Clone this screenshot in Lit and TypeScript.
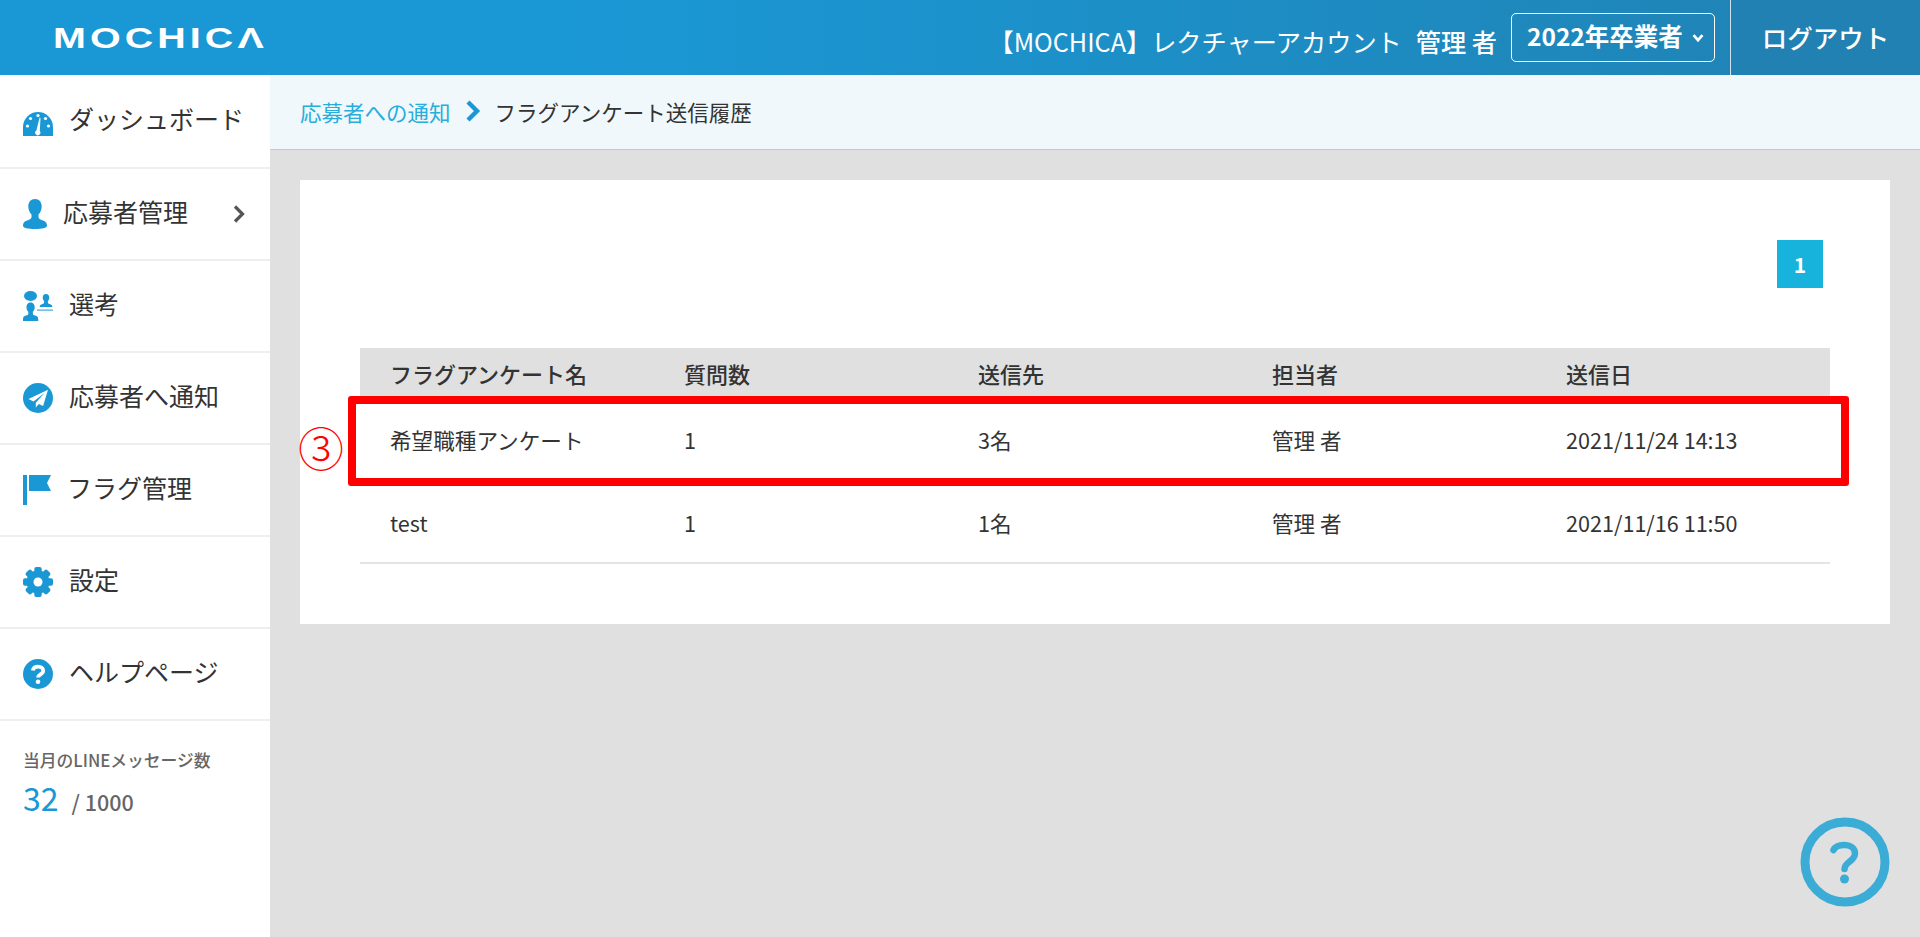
import { LitElement, html, css, svg } from "lit";
import { customElement } from "lit/decorators.js";

const teeth = [0, 45, 90, 135, 180, 225, 270, 315];

const icons: Record<string, unknown> = {
  gauge: svg`<svg class="ic" viewBox="0 0 30 30"><path fill="#1a98d5" d="M0 30V21A15 15 0 0 1 30 21V30Z"/><g fill="#fff"><circle cx="15" cy="9.500" r="1.600"/><circle cx="7.500" cy="12.500" r="1.600"/><circle cx="22.500" cy="12.500" r="1.600"/><circle cx="4.500" cy="20" r="1.600"/><circle cx="25.500" cy="20" r="1.600"/><path d="M16.600 11.500 17.500 12 16.800 25a2.600 2.600 0 1 1-3.400-.6Z"/></g></svg>`,
  person: svg`<svg class="ic" viewBox="0 0 30 30"><path fill="#1a98d5" d="M12 0c4.200 0 6.700 3.200 6.700 7.300 0 3.300-1.400 6.500-3.200 8.300v2.400c0 1.500 1.200 2.200 3.200 3 2.800 1 5.300 2.100 5.300 5.700 0 2.300-5 3.300-12 3.300S0 29 0 26.700c0-3.600 2.500-4.700 5.300-5.700 2-.8 3.200-1.500 3.200-3v-2.400C6.700 13.800 5.300 10.600 5.300 7.300 5.300 3.200 7.800 0 12 0Z"/></svg>`,
  select: svg`<svg class="ic" viewBox="0 0 30 30"><g fill="#1a98d5"><ellipse cx="7.500" cy="5" rx="6.500" ry="5"/><path d="M7.500 11.500c3 0 4.200 2.300 4.200 4.700 0 2-.8 3.600-1.800 4.600v2c0 1 1 1.400 2.200 1.800 1.800.6 3.100 1.200 3.100 3.400v2H0v-2c0-2.200 1.300-2.800 3.100-3.400 1.200-.4 2.200-.8 2.200-1.800v-2c-1-1-1.800-2.600-1.800-4.600 0-2.400 1.200-4.700 4-4.700Z"/><path d="M23 3c2.200 0 3.300 1.500 3.300 3.600 0 1.500-.6 2.800-1.400 3.500v1.400c0 .8.800 1.100 1.700 1.400 1.600.5 2.700 1 2.700 3.100H16.700c0-2.100 1.100-2.600 2.700-3.100.9-.3 1.700-.6 1.700-1.400v-1.400c-.8-.7-1.400-2-1.400-3.500C19.700 4.500 20.800 3 23 3Z"/><rect x="14" y="18.600" width="16" height="1"/></g></svg>`,
  send: svg`<svg class="ic" viewBox="0 0 30 30"><circle cx="15" cy="15" r="15" fill="#1a98d5"/><path fill="#fff" d="M25 6.800 5.500 16l5 2.400L21.500 10l-8.700 9.800v4.700l3-3.500 4.300 2Z"/></svg>`,
  flag: svg`<svg class="ic" viewBox="0 0 30 30"><path fill="#1a98d5" d="M0 0h4v30H0zM6 0h22l-4 8 4 8H6z"/></svg>`,
  gear: svg`<svg class="ic" viewBox="0 0 30 30"><g fill="#1a98d5"><circle cx="15" cy="15" r="11.500"/>${teeth.map(
    (a) => svg`<rect x="11.300" y="0" width="7.400" height="8" rx="2" transform="rotate(${a} 15 15)"/>`
  )}</g><circle cx="15" cy="15" r="4.500" fill="#fff"/></svg>`,
  help: svg`<svg class="ic" viewBox="0 0 30 30"><circle cx="15" cy="15" r="15" fill="#1a98d5"/><path fill="none" stroke="#fff" stroke-width="3.800" d="M9.800 11.500c.5-2.600 2.600-3.900 5.200-3.900 3 0 5.200 1.700 5.200 4.100 0 3.700-5.200 3.600-5.200 6.800"/><circle cx="15" cy="22.700" r="2.300" fill="#fff"/></svg>`,
};

const navItems = [
  { icon: "gauge", label: "ダッシュボード", cls: "" },
  { icon: "person", label: "応募者管理", cls: "narrow", more: true },
  { icon: "select", label: "選考", cls: "" },
  { icon: "send", label: "応募者へ通知", cls: "" },
  { icon: "flag", label: "フラグ管理", cls: "tight" },
  { icon: "gear", label: "設定", cls: "" },
  { icon: "help", label: "ヘルプページ", cls: "" },
];

const rows = [
  ["希望職種アンケート", "1", "3名", "管理 者", "2021/11/24 14:13"],
  ["test", "1", "1名", "管理 者", "2021/11/16 11:50"],
];

@customElement("app-root")
export class AppRoot extends LitElement {
  static styles = css`
    :host {
      display: block;
      width: 100%;
      height: 937px;
      overflow: hidden;
      background: #e0e0e0;
      color: #333;
      font-family: "Noto Sans CJK JP", "Noto Sans", sans-serif;
      position: relative;
    }
    .top {
      height: 75px;
      display: flex;
      align-items: center;
      color: #fff;
      background: linear-gradient(90deg, #1a98d5 0%, #1a98d5 30%, #2082b3 100%);
    }
    .logo {
      margin-left: 53px;
      width: 212px;
      font-family: "Liberation Sans", sans-serif;
      font-weight: 700;
      font-size: 29px;
      line-height: 30px;
      letter-spacing: 3px;
      transform: scaleX(1.36);
      transform-origin: left center;
      white-space: nowrap;
    }
    .who {
      margin-left: auto;
      font-size: 25.200px;
      line-height: 1;
      white-space: nowrap;
      margin-top: 8px;
    }
    .who span {
      margin-left: 14px;
      font-weight: 500;
    }
    .year {
      margin-left: 14px;
      width: 204px;
      height: 49px;
      box-sizing: border-box;
      border: 1px solid #fff;
      border-radius: 5px;
      display: flex;
      align-items: center;
      padding: 0 0 4px 15px;
      gap: 8px;
      font-size: 24.500px;
      font-weight: 700;
      white-space: nowrap;
    }
    .year svg {
      width: 14px;
      height: 10px;
      margin-top: 4px;
    }
    .logout {
      margin-left: 15px;
      height: 75px;
      width: 190px;
      box-sizing: border-box;
      border-left: 1px solid #cfe3ee;
      background: #2081b2;
      display: flex;
      align-items: center;
      justify-content: center;
      font-size: 25.500px;
      font-weight: 500;
      padding-bottom: 3px;
    }
    .body {
      display: flex;
      height: 862px;
    }
    .side {
      width: 270px;
      flex: none;
      background: #fff;
      box-sizing: border-box;
    }
    .item {
      height: 92px;
      box-sizing: border-box;
      border-bottom: 2px solid #eee;
      display: flex;
      align-items: center;
      padding-left: 23px;
      font-size: 25px;
      color: #333;
    }
    .item:first-child {
      height: 94px;
    }
    .ic {
      width: 30px;
      height: 30px;
      flex: none;
      margin-right: 16px;
    }
    .item.narrow .ic {
      margin-right: 10px;
    }
    .item.tight .ic {
      margin-right: 14px;
    }
    .item .more {
      margin-left: auto;
      margin-right: 24px;
      width: 14px;
      height: 20px;
    }
    .item .lab {
      line-height: 1;
      margin-top: -6px;
    }
    .count {
      padding: 27px 0 0 23px;
    }
    .count .t {
      font-size: 16.800px;
      font-weight: 500;
      color: #666;
      line-height: 24px;
    }
    .count .n {
      display: flex;
      align-items: baseline;
      margin-top: 4px;
      line-height: 42px;
    }
    .count .big {
      color: #1a98d5;
      font-size: 32px;
      font-weight: 400;
    }
    .count .of {
      color: #666;
      font-size: 21.500px;
      font-weight: 500;
      margin-left: 13px;
    }
    .main {
      flex: 1;
      min-width: 0;
    }
    .crumb {
      height: 75px;
      box-sizing: border-box;
      background: #f0f8fc;
      border-bottom: 1px solid #c2c7da;
      display: flex;
      align-items: center;
      padding: 0 0 2px 30px;
      font-size: 21.500px;
    }
    .crumb a {
      color: #27aedb;
    }
    .crumb svg {
      width: 18px;
      height: 24px;
      margin: 0 13px 0 13px;
    }
    .card {
      margin: 30px 30px 0;
      height: 444px;
      box-sizing: border-box;
      background: #fff;
      padding: 60px 60px 0;
      position: relative;
    }
    .pager {
      display: flex;
      justify-content: flex-end;
      padding-right: 7px;
    }
    .pager span {
      width: 46px;
      height: 48px;
      background: #18b3dc;
      color: #fff;
      font-weight: 700;
      font-size: 21px;
      display: flex;
      align-items: center;
      justify-content: center;
    }
    .table {
      margin-top: 60px;
    }
    .tr {
      display: grid;
      grid-template-columns: repeat(5, 294px);
      align-items: center;
      box-sizing: border-box;
      height: 81px;
      padding-bottom: 4px;
      font-size: 21.600px;
      color: #333;
    }
    .tr > div {
      padding-left: 30px;
      white-space: nowrap;
    }
    .tr.head {
      height: 53px;
      background: #e0e0e0;
      font-size: 22px;
      font-weight: 500;
    }
    .tr:last-child {
      height: 82px;
      border-bottom: 2px solid #e4e4e4;
      padding-bottom: 0;
    }
    .mark {
      position: absolute;
      left: 48px;
      top: 216px;
      width: 1501px;
      height: 90px;
      box-sizing: border-box;
      border: 8px solid #f00;
      border-radius: 3px;
    }
    .num {
      position: absolute;
      left: -2px;
      top: 236px;
      width: 46px;
      text-align: center;
      color: #f00;
      font-size: 46px;
      font-weight: 300;
      line-height: 60px;
    }
    .float {
      position: absolute;
      left: 1800px;
      top: 817px;
      width: 90px;
      height: 90px;
    }
  `;

  render() {
    return html`
      <div class="top">
        <div class="logo">MOCHICΛ</div>
        <div class="who">【MOCHICA】レクチャーアカウント<span>管理 者</span></div>
        <div class="year">
          2022年卒業者
          <svg viewBox="0 0 12 9"><path d="M2 2l4 4.500L10 2" fill="none" stroke="#fff" stroke-width="2.400"/></svg>
        </div>
        <div class="logout">ログアウト</div>
      </div>
      <div class="body">
        <nav class="side">
          ${navItems.map(
            (n) => html`<div class="item ${n.cls}">
              ${icons[n.icon]}<span class="lab">${n.label}</span>
              ${n.more
                ? html`<svg class="more" viewBox="0 0 14 20"><path d="M3 2.500l7.500 7.500L3 17.500" fill="none" stroke="#555" stroke-width="3.200"/></svg>`
                : ""}
            </div>`
          )}
          <div class="count">
            <div class="t">当月のLINEメッセージ数</div>
            <div class="n"><span class="big">32</span><span class="of">/ 1000</span></div>
          </div>
        </nav>
        <main class="main">
          <div class="crumb">
            <a>応募者への通知</a>
            <svg viewBox="0 0 18 24"><path d="M4 3l9 9-9 9" fill="none" stroke="#1a98d5" stroke-width="4.400"/></svg>
            <span>フラグアンケート送信履歴</span>
          </div>
          <section class="card">
            <div class="pager"><span>1</span></div>
            <div class="table">
              <div class="tr head">
                <div>フラグアンケート名</div><div>質問数</div><div>送信先</div><div>担当者</div><div>送信日</div>
              </div>
              ${rows.map((r) => html`<div class="tr">${r.map((c) => html`<div>${c}</div>`)}</div>`)}
            </div>
            <div class="mark"></div>
            <div class="num">③</div>
          </section>
        </main>
      </div>
      <svg class="float" viewBox="0 0 90 90">
        <circle cx="45" cy="45" r="40" fill="none" stroke="#3bacd6" stroke-width="9"/>
        <path d="M33.500 33c1.800-3.500 6-5 10.500-5 6.500 0 11 3.500 11 8.500 0 8-10.500 8-10.500 15.500" fill="none" stroke="#3bacd6" stroke-width="6.500" stroke-linecap="round"/>
        <circle cx="44.500" cy="62" r="4.500" fill="#3bacd6"/>
      </svg>
    `;
  }
}
